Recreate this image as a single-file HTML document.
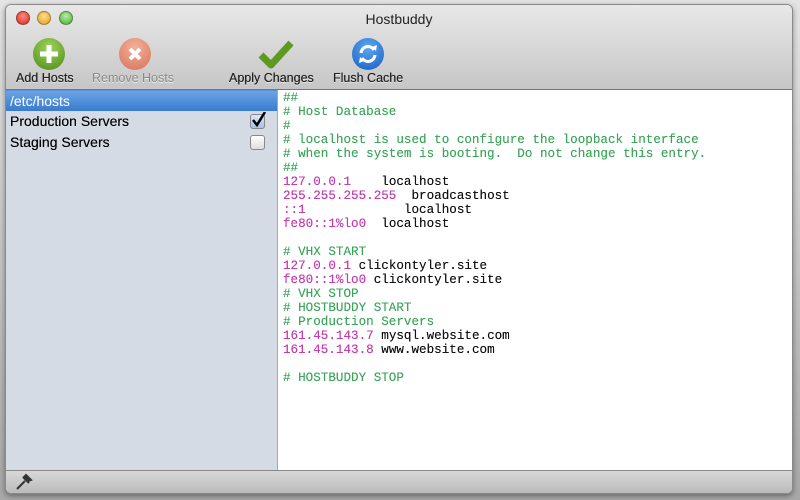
<!DOCTYPE html>
<html><head><style>
*{margin:0;padding:0;box-sizing:border-box}
body{width:800px;height:500px;background:linear-gradient(#e4e4e4,#a8a8a8);font-family:"Liberation Sans",sans-serif;position:relative;overflow:hidden}
.win{position:absolute;left:5px;top:4px;width:788px;height:490px;border-radius:6px;overflow:hidden;border:1px solid #8a8a8a;background:#fff;box-shadow:0 2px 6px rgba(0,0,0,.4)}
.tb{position:absolute;left:0;top:0;width:100%;height:85px;background:linear-gradient(#e8e8e8,#c6c6c6);border-bottom:1px solid #777}
.title{position:absolute;top:6px;width:100%;text-align:center;font-size:14px;color:#222}
.light{position:absolute;top:6px;width:14px;height:14px;border-radius:50%;border:1px solid rgba(0,0,0,.3)}
.btn{position:absolute;top:66px;font-size:12.5px;color:#222;text-shadow:0 0 0.4px #222,0 1px 0 #eee}
.ic{position:absolute;top:33px;width:32px;height:32px;border-radius:50%}
.side{position:absolute;left:0;top:85px;width:272px;height:380px;background:#d4dbe4;border-right:1px solid #aaa}
.sel{height:21px;background:linear-gradient(#6aa4e4,#3a7bd0);color:#fff;font-size:14px;padding:2px 4px;border-top:1px solid #5b8fd6}
.row{height:21px;font-size:14px;padding:2px 4px;color:#000;position:relative;text-shadow:0 0 0.3px #000}
.cb{position:absolute;right:12px;top:3px;width:15px;height:15px;border:1px solid #888;border-radius:3px;background:linear-gradient(#fff,#ddd)}
.code{position:absolute;left:277px;top:85px;font-family:"Liberation Mono",monospace;font-size:12.6px;line-height:14px;white-space:pre;color:#111;padding-top:1px;text-shadow:0 0 0.3px currentColor}
.g{color:#3ca55a}.m{color:#c23ab0}
.bb{position:absolute;left:0;top:465px;width:100%;height:25px;background:linear-gradient(#d8d8d8,#b8b8b8);border-top:1px solid #888}
</style></head><body>
<div class="win">
<div class="tb">
<div class="title">Hostbuddy</div>
<div class="light" style="left:10px;background:radial-gradient(circle at 50% 35%,#ff8a80,#d8281e)"></div>
<div class="light" style="left:31px;background:radial-gradient(circle at 50% 35%,#ffe08a,#e09a1a)"></div>
<div class="light" style="left:53px;background:radial-gradient(circle at 50% 35%,#b6f0a0,#4aa83a)"></div>
<div class="ic" style="left:27px;background:radial-gradient(circle at 50% 30%,#9ed45a,#4c8a1a)"><svg width="32" height="32"><path d="M16 7v18M7 16h18" stroke="#fff" stroke-width="5"/></svg></div>
<div class="ic" style="left:113px;background:radial-gradient(circle at 50% 30%,#f4b09a,#d77258)"><svg width="32" height="32"><path d="M11 11l10 10M21 11l-10 10" stroke="#fff" stroke-width="4"/></svg></div>
<div style="position:absolute;left:252px;top:34px"><svg width="36" height="30"><path d="M3 16l10 10L33 4" stroke="#5e9a22" stroke-width="7" fill="none" stroke-linejoin="round"/></svg></div>
<div class="ic" style="left:346px;background:radial-gradient(circle at 50% 30%,#5aa8f0,#1a5cc0)"><svg width="32" height="32"><path d="M9 15a7 7 0 0 1 13-3M23 17a7 7 0 0 1-13 3" stroke="#fff" stroke-width="3" fill="none"/><path d="M20 9l4 4 1-6zM12 23l-4-4-1 6z" fill="#fff"/></svg></div>
<div class="btn" style="left:10px">Add Hosts</div>
<div class="btn" style="left:86px;color:#8a8a8a;text-shadow:0 1px 0 #eee">Remove Hosts</div>
<div class="btn" style="left:223px">Apply Changes</div>
<div class="btn" style="left:327px">Flush Cache</div>
</div>
<div class="side">
<div class="sel">/etc/hosts</div>
<div class="row">Production Servers<div class="cb" style="background:linear-gradient(#dde8f8,#a8c0e0)"><svg width="15" height="15" style="position:absolute;left:0;top:-3px"><path d="M2 8l4 5L14 0" stroke="#000" stroke-width="2.5" fill="none"/></svg></div></div>
<div class="row">Staging Servers<div class="cb"></div></div>
</div>
<div class="code"><span class="g">##
# Host Database
#
# localhost is used to configure the loopback interface
# when the system is booting.  Do not change this entry.
##</span>
<span class="m">127.0.0.1</span>    localhost
<span class="m">255.255.255.255</span>  broadcasthost
<span class="m">::1</span>             localhost
<span class="m">fe80::1%lo0</span>  localhost

<span class="g"># VHX START</span>
<span class="m">127.0.0.1</span> clickontyler.site
<span class="m">fe80::1%lo0</span> clickontyler.site
<span class="g"># VHX STOP
# HOSTBUDDY START
# Production Servers</span>
<span class="m">161.45.143.7</span> mysql.website.com
<span class="m">161.45.143.8</span> www.website.com

<span class="g"># HOSTBUDDY STOP</span></div>
<div class="bb"><svg width="20" height="20" style="position:absolute;left:8px;top:2px"><path d="M3 16l8-8M9 4l6 6M12 2l5 5-3 1-4-4z" stroke="#333" stroke-width="2" fill="#333"/></svg></div>
</div>
</body></html>
